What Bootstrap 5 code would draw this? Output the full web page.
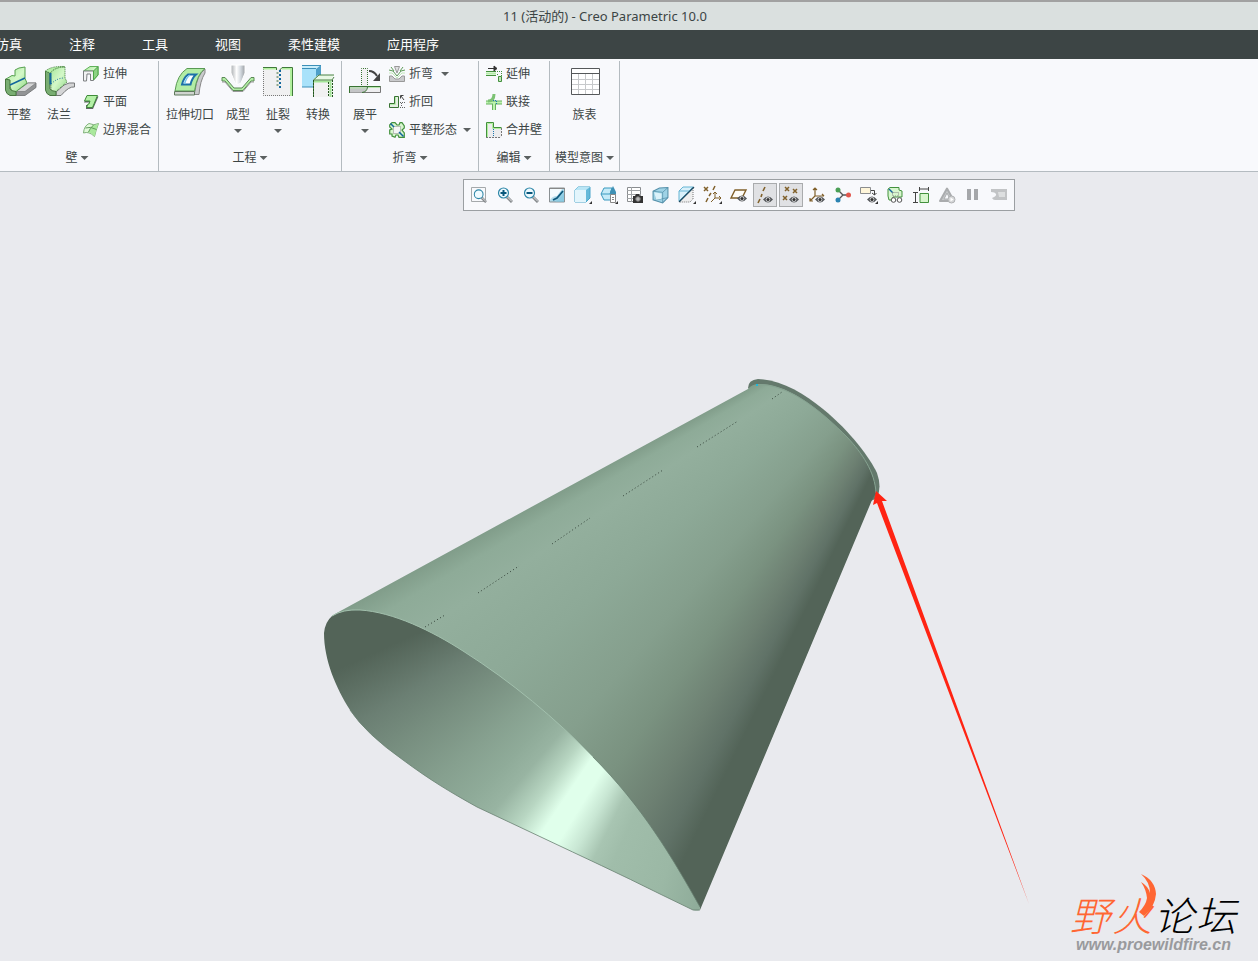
<!DOCTYPE html>
<html lang="zh-CN">
<head>
<meta charset="utf-8">
<meta name="viewport" content="width=device-width, initial-scale=1">
<title>11 (活动的) - Creo Parametric 10.0</title>
<link rel="stylesheet" href="https://cdn.jsdelivr.net/npm/bootstrap@5.3.0/dist/css/bootstrap.min.css">
<script src="https://cdn.jsdelivr.net/npm/bootstrap@5.3.0/dist/js/bootstrap.bundle.min.js"></script>
<style>
  body { background: #e9eaee; color: #3c4545; font-family: "Noto Sans", "Noto Sans CJK SC", sans-serif; font-size: 12px; line-height: 16px; overflow-x: hidden; }
  .app-title { background: #dae0df; border-top: 2px solid #a1a1a1; height: 30px; font-size: 13px; padding-right: 48px; }
  .app-tabs { background: #3d4545; height: 29px; gap: 47px; margin-left: -4px; }
  .tab-band { background: #3d4545; overflow: hidden; }
  .app-tabs a { color: #fff; font-size: 13px; line-height: 16px; padding-bottom: 2px; text-decoration: none; white-space: nowrap; }
  .ribbon { background: #f8f9fc; border-bottom: 1px solid #b4bbc0; height: 113px; overflow: hidden; }
  .ribbon-group { border-right: 1px solid #b4bbc0; margin-top: 2px; padding: 0 3px; }
  .ribbon-group:first-child { margin-left: -4px; }
  .ribbon-group:last-child { padding: 0 5px; }
  .group-body { height: 84px; }
  .group-name { height: 26px; gap: 3px; }
  .ribbon button, .view-bar button { background: none; border: 0; padding: 0; color: inherit; font-size: 12px; white-space: nowrap; }
  .big-btn { width: 40px; padding-top: 4px !important; }
  .big-btn.wide-btn { width: 56px; }
  .big-btn .btn-label { margin-top: 10px; }
  .small-col { padding: 0 4px; margin-top: -1px; }
  .small-btn { height: 28px; gap: 4px; }
  .caret { width: 8px; height: 4px; background: #5b6060; clip-path: polygon(0 0, 100% 0, 50% 100%); }
  .small-btn .caret { margin-left: 2px; }
  .big-btn .caret { margin-top: 6px; }
  svg { overflow: visible; display: block; }
  .workspace { position: relative; }
  .view-bar { position: absolute; top: 7px; left: 36.8%; height: 32px; padding: 0 3px; gap: 2px; background: #f8f9fc; border: 1px solid #9b9fa2; }
  .view-bar button { width: 24px; height: 24px; display: flex; align-items: center; justify-content: center; }
  .view-bar button.pressed { background: #e0e1e4; border: 1px solid #a9abad; }
  .scene { width: 100%; height: auto; overflow: hidden; }
  .outer-skin, .inner-skin { width: 600px; height: 560px; }
  .outer-skin { background: conic-gradient(at 673px -104px, #536458 206deg, #607267 208deg, #6d8072 211deg, #7a9280 215.5deg, #859f8d 221deg, #8da997 229deg, #93af9d 236.5deg, #8eab98 239.5deg, #809c89 241.5deg); }
  .inner-skin { background: conic-gradient(at 491px 93px, #8ba896 190deg, #9bb8a5 197deg, #a0bdaa 204deg, #a8c5b2 206.5deg, #c8e6d3 209deg, #e0ffeb 211.5deg, #e0ffeb 214deg, #b8d6c2 217deg, #98b4a2 220.5deg, #8fab99 223.5deg, #86a08f 228deg, #788f80 234deg, #6b7f73 239deg, #536458 245.5deg); }
  .brand { position: absolute; right: 22px; bottom: 7px; }
  .brand-name { font-family: "Noto Sans CJK SC", sans-serif; font-weight: 300; font-style: italic; font-size: 40px; line-height: 44px; gap: 2px; color: #000; }
  .brand-hot { color: #ff6633; position: relative; }
  .brand-flame { position: absolute; left: 26px; top: -18px; }
  .brand-site { font-family: "Liberation Sans", sans-serif; font-weight: 700; font-style: italic; font-size: 16px; line-height: 18px; color: #999a9d; padding-left: 6px; }
</style>
</head>
<body>
<svg width="0" height="0" class="position-absolute" aria-hidden="true">
  <defs>
    <linearGradient id="gGreen" x1="0" y1="0" x2="1" y2="1"><stop offset="0" stop-color="#a5e79a"/><stop offset=".5" stop-color="#d4f8c8"/><stop offset="1" stop-color="#8ed886"/></linearGradient>
    <linearGradient id="gSteel" x1="0" y1="0" x2="1" y2="0"><stop offset="0" stop-color="#aaaeb1"/><stop offset=".4" stop-color="#fff"/><stop offset=".7" stop-color="#d0d6dc"/><stop offset="1" stop-color="#9a9ea2"/></linearGradient>
    <linearGradient id="gBlue" x1="0" y1="0" x2="1" y2="1"><stop offset="0" stop-color="#fff"/><stop offset="1" stop-color="#64b8d8"/></linearGradient>
    <symbol id="eye" viewBox="0 0 10 7"><path d="M0 3.500Q5-2.500 10 3.500Q5 9.500 0 3.500Z" fill="#55585b"/><circle cx="5" cy="3.500" r="2.300" fill="#e8e9ea"/><circle cx="5" cy="3.500" r="1.600" fill="#333"/></symbol>
    <symbol id="lens" viewBox="0 0 16 16"><path d="M10 10L15 15" stroke="#85898c" stroke-width="3"/><path d="M10.500 10L15 14.500" stroke="#e3e5e6"/><circle cx="6.500" cy="6" r="5" fill="#eefaff" stroke="#2f87a8" stroke-width="1.200"/></symbol>
  </defs>
</svg>

<div class="d-flex flex-column min-vh-100">
  <header class="app-title d-flex align-items-center justify-content-center">11 (活动的) - Creo Parametric 10.0</header>

  <div class="tab-band">
    <nav class="app-tabs d-flex align-items-center">
      <a href="#">仿真</a><a href="#">注释</a><a href="#">工具</a><a href="#">视图</a><a href="#">柔性建模</a><a href="#">应用程序</a>
    </nav>
  </div>

  <div class="ribbon d-flex">
    <section class="ribbon-group d-flex flex-column">
      <div class="group-body d-flex">
        <button class="big-btn d-flex flex-column align-items-center">
          <svg width="32" height="32" viewBox="0 0 32 32"><path d="M13 27L25 18H33V22.500L22 30.500H13Z" fill="#929496" stroke="#6b6d6f" stroke-width=".8"/><path d="M13 26.500L25 18H33L22 26.500Z" fill="#d4d5d6" stroke="#77797a" stroke-width=".7"/><path d="M3 14L9 10.500L12 11V5L16 3L22 2V13.500L24 18L13 26.500Q9 28 8 24Z" fill="url(#gGreen)" stroke="#56a04f"/><path d="M2.500 14L7 15V24Q8 26 13 26.500V30.500H7Q3 29 2.500 25Z" fill="#79ad72" stroke="#47763f"/><path d="M7 20L22 13" stroke="#12679c" stroke-width="1.600"/></svg>
          <span class="btn-label">平整</span>
        </button>
        <button class="big-btn d-flex flex-column align-items-center">
          <svg width="32" height="32" viewBox="0 0 32 32"><path d="M13 27L21 20Q26 17 31.500 18V22Q26 21 18 30.500H13Z" fill="#d4d5d6" stroke="#77797a"/><path d="M7.500 8Q12 1.500 22 2V13L24 17L13 26.500Q9 28 8 24Z" fill="url(#gGreen)" stroke="#3f7a38" stroke-dasharray="1 1"/><path d="M2.500 6L7 8V24Q8 26 13 26.500V30.500H7Q3 29 2.500 25Z" fill="#79ad72" stroke="#47763f"/><path d="M2.500 6Q8 1 21 1.500L22 2Q12 2 7 8Z" fill="#b2eda5" stroke="#3f7a38" stroke-dasharray="1 1"/><path d="M7.500 8V19.500" stroke="#12679c" stroke-width="2"/><path d="M8 19Q14 13 21 13" fill="none" stroke="#12679c" stroke-dasharray="1 1.500"/></svg>
          <span class="btn-label">法兰</span>
        </button>
        <div class="small-col d-flex flex-column">
          <button class="small-btn d-flex align-items-center"><svg width="16" height="16" viewBox="0 0 16 16"><path d="M.5 5L7 .5H15V9L10.500 14V5Z" fill="url(#gGreen)" stroke="#62b25c"/><path d="M.5 15V5H10.500V14.500H7.500V8H4L3.500 15Z" fill="#f1f2f2" stroke="#7d8082"/><path d="M10.500 5L15 .5V9L10.500 14Z" fill="#8cd282" stroke="#4ca446"/></svg>拉伸</button>
          <button class="small-btn d-flex align-items-center"><svg width="16" height="16" viewBox="0 0 16 16"><path d="M4 2.500H15.500L10 15H3V11H6L7 8.500H1Z" fill="#626567"/><path d="M4 1.500H14.500L9.500 13.500H3.500L5 10H6L7 7H1.500Z" fill="#b4f0a6" stroke="#3f8c3a"/></svg>平面</button>
          <button class="small-btn d-flex align-items-center"><svg width="16" height="16" viewBox="0 0 16 16"><path d="M.5 11Q1 4 6 1.500Q11 4 15.500 1.500Q13 8 11.500 14.500Q6 9 .5 11Z" fill="#e1fada" stroke="#80b27a"/><path d="M10.500 3Q14 3.500 15.500 1.500Q13 8 11.500 14.500Q9 11 5.500 10Q8 5 10.500 3Z" fill="#a9e89c"/><path d="M10.500 3Q7 6 5.500 10M2.500 6Q7 4 13.500 7.500" fill="none" stroke="#5f9d59"/></svg>边界混合</button>
        </div>
      </div>
      <button class="group-name d-flex align-items-center justify-content-center">壁<span class="caret"></span></button>
    </section>

    <section class="ribbon-group d-flex flex-column">
      <div class="group-body d-flex">
        <button class="big-btn wide-btn d-flex flex-column align-items-center">
          <svg width="32" height="32" viewBox="0 0 32 32"><path d="M21 26Q23 10 31 4V8Q26 16 25 29.500H20Z" fill="#c9cbcc" stroke="#888"/><path d="M1 26Q3 10 13 3.500H31Q23 9 20.500 26Z" fill="#b2eda5" stroke="#5a9a54"/><path d="M.5 26.500H20.500V30H.5Z" fill="#d0d4d0" stroke="#5f7a5c"/><path d="M8 19.500Q9.500 13 14 9.500H22Q18 13 16.500 19.500Z" fill="#fff" stroke="#1c70a8" stroke-width="2"/><path d="M10.500 19Q12 13 16 10" fill="none" stroke="#75c4ec" stroke-width="1.500"/></svg>
          <span class="btn-label">拉伸切口</span>
        </button>
        <button class="big-btn d-flex flex-column align-items-center">
          <svg width="32" height="32" viewBox="0 0 32 32"><path d="M0 12.500H3L12 23H20L29 12.500H32V16H29L21 25.500H11L3 16H0Z" fill="#b2eda5" stroke="#5a8a54"/><path d="M0 17H3L11 26.500H21L29 17H32" fill="none" stroke="#999"/><path d="M9 0H23V8L19 18Q16 21 13 18L9 8Z" fill="url(#gSteel)" stroke="#fff"/></svg>
          <span class="btn-label">成型</span><span class="caret"></span>
        </button>
        <button class="big-btn d-flex flex-column align-items-center">
          <svg width="32" height="32" viewBox="0 0 32 32"><path d="M1 3H31V31H1Z" fill="#f0f0f1"/><path d="M1.500 4V30.500H28" fill="none" stroke="#777" stroke-dasharray="1 1"/><path d="M1 3.500H14M20 3.500H29V31" fill="none" stroke="#b2f09e" stroke-width="2"/><path d="M1 2.500H14.500V5M17 6L20 2.500H30.500V31" fill="none" stroke="#407a3a"/><path d="M15.500 7V22" stroke="#8fa88c" stroke-width="2" stroke-dasharray="2 2"/><path d="M18 5V24" stroke="#12679c" stroke-width="2" stroke-dasharray="2 2"/></svg>
          <span class="btn-label">扯裂</span><span class="caret"></span>
        </button>
        <button class="big-btn d-flex flex-column align-items-center">
          <svg width="32" height="32" viewBox="0 0 32 32"><path d="M0 4H14V22H0Z" fill="#a9e2fa"/><path d="M0 4H14L19 0H0Z" fill="#c9eefb"/><path d="M14 4L19 0V17L14 22Z" fill="#4d9fc8"/><path d="M0 .500H19M0 3.500H14M0 22H14" stroke="#3c8fb8"/><path d="M12 15H30V32H12Z" fill="#f1f1f2"/><path d="M11 15L16 10H32L29 15Z" fill="#e8f7e4"/><path d="M12 16.500H28.500V32" fill="none" stroke="#a4e598" stroke-width="2"/><path d="M11.500 32V15L17 10H32M11.500 15H30L32 12" fill="none" stroke="#4b8245"/><path d="M11.500 15V32M26.500 17V32M30.500 15V32" fill="none" stroke="#24541f" stroke-dasharray="2 1"/></svg>
          <span class="btn-label">转换</span>
        </button>
      </div>
      <button class="group-name d-flex align-items-center justify-content-center">工程<span class="caret"></span></button>
    </section>

    <section class="ribbon-group d-flex flex-column">
      <div class="group-body d-flex">
        <button class="big-btn d-flex flex-column align-items-center">
          <svg width="32" height="32" viewBox="0 0 32 32"><path d="M12.500 22V3.500H18.500V22Z" fill="#f1f1f1" stroke="#397333" stroke-dasharray="1 1"/><path d="M.5 21.500H31.500V27.500H.5Z" fill="#eeeef0" stroke="#777"/><path d="M.5 22H18Q17 27 13 27.500H.5Z" fill="#c4c5c7"/><path d="M.5 28V21.500H31.500" fill="none" stroke="#397333"/><path d="M1 23H17M19 22.500H31" stroke="#b8e8ae"/><path d="M13 27.500Q18 27 18.500 22" fill="none" stroke="#397333"/><path d="M20 6Q25 6 28 11" fill="none" stroke="#444" stroke-width="2"/><path d="M31 8V16H24Z" fill="#444"/></svg>
          <span class="btn-label">展平</span><span class="caret"></span>
        </button>
        <div class="small-col d-flex flex-column">
          <button class="small-btn d-flex align-items-center"><svg width="16" height="16" viewBox="0 0 16 16"><path d="M0 4L4 5L8 10L12 5L16 4M2 1L5 5M14 1L11 5" fill="none" stroke="#5c9a57"/><path d="M0 7H3L8 12L13 7H16" fill="none" stroke="#c2e9ba"/><path d="M5.500 .5H10.500L8 7Z" fill="#dfe0e2" stroke="#999"/><path d="M.5 10H3L6 13H10L13 10H15.500V15.500H.5Z" fill="#c9cacc" stroke="#999"/></svg>折弯<span class="caret ms-1"></span></button>
          <button class="small-btn d-flex align-items-center"><svg width="16" height="16" viewBox="0 0 16 16"><path d="M.5 9.500H5.500V2.500H9.500V13.500H.5Z" fill="#e5eee3" stroke="#397333"/><path d="M1 10.500H6.500V3" fill="none" stroke="#b4ecaa"/><path d="M11 8.500H16M11 13.500H16M12.500 9V13" stroke="#666" stroke-dasharray="1 1"/><path d="M12 2L15 6M11.500 4.500V1.500H14.500" fill="none" stroke="#444"/></svg>折回</button>
          <button class="small-btn d-flex align-items-center"><svg width="16" height="16" viewBox="0 0 16 16"><path d="M.7 3L3 .7H6L8 3H10L11 .7H13L15.300 4V6L13 8L15.300 11V15.300H10L9 13H7L6 15.300L3 14V12H.7V8L3 7L.7 5Z" fill="#d7f6ce" stroke="#43913d" stroke-width="1.200"/><path d="M4.500 4.500H11.500V11.500H4.500Z" fill="#f4f5f5" stroke="#888" stroke-dasharray="1 1"/><path d="M1.500 1.500L5 5M10 10L14.500 14.500" stroke="#12679c" stroke-width="1.500"/></svg>平整形态<span class="caret"></span></button>
        </div>
      </div>
      <button class="group-name d-flex align-items-center justify-content-center">折弯<span class="caret"></span></button>
    </section>

    <section class="ribbon-group d-flex flex-column">
      <div class="group-body d-flex">
        <div class="small-col d-flex flex-column">
          <button class="small-btn d-flex align-items-center"><svg width="16" height="16" viewBox="0 0 16 16"><path d="M0 5.500H10M0 9.500H10" stroke="#43913d"/><path d="M0 7.500H10" stroke="#b2eda5" stroke-width="2"/><path d="M2 2.500H10M8 0V5L11 2.500Z" fill="#333" stroke="#333"/><path d="M11 5.500H16M11 8.500H13M15.500 5V10" stroke="#43913d" stroke-dasharray="1 1"/><path d="M12.500 10.500H15.500V15.500H12.500Z" fill="#c5e5bd" stroke="#43913d"/></svg>延伸</button>
          <button class="small-btn d-flex align-items-center"><svg width="16" height="16" viewBox="0 0 16 16"><path d="M0 8.500H16M8 9V16" stroke="#67b15f" stroke-width="4"/><path d="M0 8.500H16M8 8V16" stroke="#bdf3b0" stroke-width="2"/><path d="M2 7Q8 7 8 0" fill="none" stroke="#7cc274" stroke-width="3"/><path d="M7 6.500H10.500V10" fill="none" stroke="#1976b0" stroke-dasharray="1 1"/></svg>联接</button>
          <button class="small-btn d-flex align-items-center"><svg width="16" height="16" viewBox="0 0 16 16"><path d="M.5 .5H7.500V5.500H15.500V15.500H.5Z" fill="#ececed"/><path d="M1.500 15V1.500H6.500V6.500H15" fill="none" stroke="#b2f09e"/><path d="M.5 15.500V.5H7.500V5.500H15.500" fill="none" stroke="#43913d"/><path d="M0 15.500H15M15.500 6V15" stroke="#777" stroke-dasharray="2 1"/><path d="M7.500 7V14" stroke="#1976b0" stroke-dasharray="1 1"/></svg>合并壁</button>
        </div>
      </div>
      <button class="group-name d-flex align-items-center justify-content-center">编辑<span class="caret"></span></button>
    </section>

    <section class="ribbon-group d-flex flex-column">
      <div class="group-body d-flex justify-content-center">
        <button class="big-btn d-flex flex-column align-items-center">
          <svg width="32" height="32" viewBox="0 0 32 32"><path d="M2.500 3.500H30.500V29.500H2.500Z" fill="#fff" stroke="#55585a"/><path d="M3 14.500H30M3 19.500H30M3 24.500H30M9.500 9V29M16.500 9V29M23.500 9V29" stroke="#c7c9cb"/><path d="M3 8.500H30" stroke="#55585a"/></svg>
          <span class="btn-label">族表</span>
        </button>
      </div>
      <button class="group-name d-flex align-items-center justify-content-center">模型意图<span class="caret"></span></button>
    </section>
  </div>

  <main class="workspace flex-grow-1">
    <svg class="scene" viewBox="0 172 1258 789" role="img" aria-label="钣金锥体模型">
      <defs>
        <clipPath id="outerClip"><path d="M333 615L748 389Q752 384 759 384C790 384 822 412 847 437C862 453 875 472 876 493L872 500L700 910C640 800 480 640 343 612Z"/></clipPath>
        <clipPath id="innerClip"><path d="M324 633Q325 622 332 616Q343 609 360 610C393 612 432 631 463 651C512 682 556 719 593 757C642 806 672 857 700 907Q701 912 693 910L660 894C620 874 583 857 543 838L477 807C450 792 430 780 403 760Q366 734 350 710C336 688 324 660 324 633Z"/></clipPath>
      </defs>
      <path d="M748 388Q748 380 758 379C782 380 803 393 823 409C851 432 870 458 877 473Q882 487 877 498L871 501Z" fill="#64796c"/>
      <g clip-path="url(#outerClip)"><foreignObject x="300" y="370" width="600" height="560"><div class="outer-skin"></div></foreignObject></g>
      <g clip-path="url(#innerClip)"><foreignObject x="300" y="370" width="600" height="560"><div class="inner-skin"></div></foreignObject></g>
      <path d="M332 616Q343 609 360 610C393 612 432 631 463 651C512 682 556 719 593 757" fill="none" stroke="#a2c0ad"/>
      <path d="M593 757C642 806 672 857 700 907M700 910L693 910L660 894C620 874 583 857 543 838L477 807C450 792 430 780 403 760Q366 734 350 710" fill="none" stroke="#688071" stroke-width=".8"/>
      <path d="M757 384.500C790 384 822 412 847 437C862 453 875 472 876 493" fill="none" stroke="#86a391"/>
      <path d="M772 399L782 392M697 447L738 421M623 496L663 470M552 544L590 518M478 593L519 566M425 627L445 615" stroke="#35443a" stroke-width="1" stroke-dasharray="1 2.500"/>
      <rect x="756" y="384" width="2" height="2" fill="#20b8d8"/>
      <path d="M876 491L887 501L882 501L1029 904L877 503L873 505Z" fill="#ff2413"/>
    </svg>

    <div class="view-bar d-flex align-items-center" role="toolbar" aria-label="视图">
      <button aria-label="重新调整"><svg width="16" height="16" viewBox="0 0 16 16"><path d="M.5 .5H14.500V14.500H.5Z" fill="#f8f9fc" stroke="#a5a9ab"/><use href="#lens" x="2" y="2" width="14" height="14"/></svg></button>
      <button aria-label="放大"><svg width="16" height="16" viewBox="0 0 16 16"><use href="#lens" width="16" height="16"/><path d="M3.500 6H9.500M6.500 3V9" stroke="#08577c" stroke-width="2"/></svg></button>
      <button aria-label="缩小"><svg width="16" height="16" viewBox="0 0 16 16"><use href="#lens" width="16" height="16"/><path d="M3.500 6H9.500" stroke="#08577c" stroke-width="2"/></svg></button>
      <button aria-label="重画"><svg width="16" height="16" viewBox="0 0 16 16"><path d="M.5 1H15.500V15H.5Z" fill="url(#gBlue)" stroke="#8a9093"/><path d="M0 1.500H16" stroke="#888"/><path d="M6 14.500Q10 13 15 7V14.500Z" fill="#8ccbe2"/><path d="M1 2H13L8 9Q3 9 1 13Z" fill="#f4fbfe"/><path d="M4 13L8 11L14 4" fill="none" stroke="#0d587c" stroke-width="1.800"/></svg></button>
      <button aria-label="显示样式"><svg width="18" height="18" viewBox="0 0 18 18"><path d="M1 4L4 1H16V12L12 16H1Z" fill="#65b9d9" stroke="#4aa6ca"/><path d="M1 4H12V16H1Z" fill="#e3f5fc"/><path d="M1 4L4 1H16L12 4Z" fill="#b9e5f5"/><path d="M18 15V18H15Z" fill="#333"/></svg></button>
      <button aria-label="已保存方向"><svg width="18" height="18" viewBox="0 0 18 18"><path d="M1 8L4 2H12L15 8L12 14H4Z" fill="#c4ebf8" stroke="#3a9abf"/><path d="M1 8H10M10 8L12 2" fill="none" stroke="#3a9abf"/><path d="M10 6L13 0L16 6V9H10Z" fill="#3f91b5"/><path d="M10.500 8.500H15.500V16.500H10.500Z" fill="#fff" stroke="#888"/><path d="M12 11.500H14M12 13.500H14" stroke="#888"/><path d="M18 15V18H15Z" fill="#333"/></svg></button>
      <button aria-label="视图管理器"><svg width="16" height="16" viewBox="0 0 16 16"><path d="M.5 .5H13.500V14.500H.5Z" fill="#fff" stroke="#8a8d90"/><path d="M0 3.500H14M0 7.500H14M0 11.500H8M4.500 0V15" stroke="#a2a5a8"/><path d="M6 9H8L9 7H12L13 9H16V16H6Z" fill="#333"/><circle cx="11" cy="12" r="2.300" fill="#bbb" stroke="#777"/></svg></button>
      <button aria-label="透视图"><svg width="17" height="17" viewBox="0 0 16 16"><path d="M1 4L7 1L15 .5V10L10 15L1 12Z" fill="#9fd3e6" stroke="#5590aa"/><path d="M1 4L10 5L15 .5M10 5V15M4 12L15 10M4 6V12" fill="none" stroke="#5590aa" stroke-width=".7"/><path d="M2 5L9 6V11L4 12Z" fill="#dcf2fa"/></svg></button>
      <button aria-label="截面"><svg width="18" height="18" viewBox="0 0 18 18"><path d="M1 15V5L5 1H15Z" fill="#d9f0fa" stroke="#67b5d4"/><path d="M1 5H11L15 1" fill="none" stroke="#67b5d4"/><path d="M15 2V13L12 16H2" fill="#eee" stroke="#777" stroke-dasharray="1 1"/><path d="M1 16L16 1" stroke="#224a60" stroke-width="1.300"/><path d="M18 15V18H15Z" fill="#333"/></svg></button>
      <button aria-label="基准显示过滤器"><svg width="18" height="18" viewBox="0 0 18 18"><path d="M0 1L4 5M4 1L0 5M11 0L9 4M7 7L5 10M4 12L2 16" stroke="#80602a" stroke-width="1.500"/><path d="M11 6V12H17M11 12L7 16M9 8L11 6L13 8M15 10L17 12L15 14" fill="none" stroke="#80602a"/><path d="M18 15V18H15Z" fill="#333"/></svg></button>
      <button aria-label="平面显示"><svg width="16" height="16" viewBox="0 0 16 16"><path d="M4 3H15L11 11H0Z" fill="#fffdf8" stroke="#80602a" stroke-width="1.400"/><use href="#eye" x="6" y="8" width="10" height="7"/></svg></button>
      <button class="pressed" aria-label="轴显示" aria-pressed="true"><svg width="16" height="16" viewBox="0 0 16 16"><path d="M8 0L6 4M5 7L4 10M3 12L1 16" stroke="#80602a" stroke-width="1.600"/><use href="#eye" x="6" y="9" width="10" height="7"/></svg></button>
      <button class="pressed" aria-label="点显示" aria-pressed="true"><svg width="16" height="16" viewBox="0 0 16 16"><path d="M2 0L6 4M6 0L2 4M10 2L14 6M14 2L10 6M0 9L4 13M4 9L0 13" stroke="#80602a" stroke-width="1.500"/><use href="#eye" x="6" y="9" width="10" height="7"/></svg></button>
      <button aria-label="坐标系显示"><svg width="16" height="16" viewBox="0 0 16 16"><path d="M6 1V9H15M6 9L1 14M4 3L6 1L8 3M1 11V14H4M13 7L15 9" fill="none" stroke="#80602a" stroke-width="1.200"/><use href="#eye" x="6" y="9" width="10" height="7"/></svg></button>
      <button aria-label="旋转中心"><svg width="16" height="16" viewBox="0 0 16 16"><path d="M3 3L8 8H13M8 8L3 13" fill="none" stroke="#555" stroke-width="1.300"/><circle cx="3" cy="3" r="2.500" fill="#4a9f55"/><circle cx="13.500" cy="8" r="2.500" fill="#e2574e"/><circle cx="3" cy="13" r="2.500" fill="#2b83b1"/></svg></button>
      <button aria-label="注释显示"><svg width="18" height="18" viewBox="0 0 18 18"><path d="M.5 1.500H10.500V7.500H.5Z" fill="#fff6da" stroke="#8b8d8f"/><path d="M11 4.500H14.500V9M12 7L14.500 9L16.500 7" fill="none" stroke="#444"/><use href="#eye" x="7" y="10" width="10" height="7"/><path d="M18 15V18H15Z" fill="#333"/></svg></button>
      <button aria-label="平整形态预览"><svg width="16" height="16" viewBox="0 0 16 16"><path d="M1 2L3 .5H12V3L15 4V10H6L5 13H2L1 9Z" fill="#d7f6ce" stroke="#43913d"/><path d="M2 2L6 6" stroke="#12679c" stroke-width="1.500"/><path d="M5.500 5.500H11.500V9H5.500Z" fill="none" stroke="#888" stroke-dasharray="1 1"/><circle cx="6.500" cy="13" r="2.300" fill="#fff" stroke="#555"/><circle cx="12.500" cy="13" r="2.300" fill="#fff" stroke="#555"/></svg></button>
      <button aria-label="尺寸"><svg width="16" height="16" viewBox="0 0 16 16"><path d="M7 6.500H15.500V15.500H7Z" fill="#d8f6ce" stroke="#43913d"/><path d="M6.500 0V4M15.500 0V4M6.500 2H15.500M0 5.500H5M0 15.500H5M2.500 5.500V15.500" stroke="#444"/></svg></button>
      <button aria-label="错误" disabled><svg width="16" height="16" viewBox="0 0 16 16"><path d="M8 1.500L15 14H1Z" fill="#c6c8ca" stroke="#aaacae" stroke-width="2" stroke-linejoin="round"/><path d="M8 6L11 12H5Z" fill="#f8f9fc" stroke="#aaacae"/><circle cx="12.500" cy="12.500" r="3.500" fill="#d6d7d8" stroke="#b0b2b4"/><path d="M11.500 10.500L14.500 12.500L11.500 14.500Z" fill="#fff"/></svg></button>
      <button aria-label="暂停" disabled><svg width="16" height="16" viewBox="0 0 16 16"><path d="M2 2H6V13H2ZM9 2H13V13H9Z" fill="#a5a7aa"/></svg></button>
      <button aria-label="继续" disabled><svg width="16" height="16" viewBox="0 0 16 16"><path d="M0 2H16V13H4Q2 13 1 11Q6 9 5 7Q4 5 0 5Z" fill="#c2c4c6"/><path d="M7 5H14V10H8Z" fill="#dddfe0"/></svg></button>
    </div>

    <div class="brand">
      <div class="brand-name d-flex"><span class="brand-hot">野</span><span class="brand-hot">火<svg class="brand-flame" width="20" height="42" viewBox="0 0 20 42"><path d="M3 0Q17 6 18 20Q17 33 6 42L1 38Q8 31 9 24Q8 15 3 8Q10 12 12 19Q12 8 3 0Z" fill="#ff6633"/></svg></span><span>论</span><span>坛</span></div>
      <div class="brand-site">www.proewildfire.cn</div>
    </div>
  </main>
</div>
</body>
</html>
